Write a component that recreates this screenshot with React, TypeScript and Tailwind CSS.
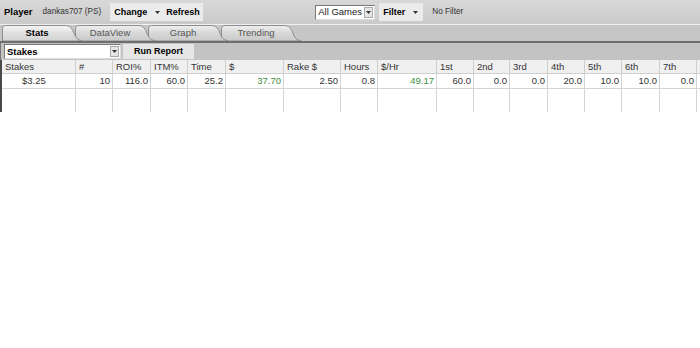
import React from "react";

const cols = ["Stakes", "#", "ROI%", "ITM%", "Time", "$", "Rake $", "Hours", "$/Hr", "1st", "2nd", "3rd", "4th", "5th", "6th", "7th", ""];
const row = ["$3.25", "10", "116.0", "60.0", "25.2", "37.70", "2.50", "0.8", "49.17", "60.0", "0.0", "0.0", "20.0", "10.0", "10.0", "0.0", ""];
const green = [5, 8];

const tabs = ["Stats", "DataView", "Graph", "Trending"];
const tabZ = ["z-40", "z-30", "z-20", "z-10"];

function Arrow() {
  return (
    <svg width="5" height="3" viewBox="0 0 5 3" className="shrink-0">
      <path d="M0 0h5L2.5 3z" fill="#333" />
    </svg>
  );
}

function SelectBox({ label, w, bold }: { label: string; w: string; bold?: boolean }) {
  return (
    <div className={`${w} flex h-[15px] items-center justify-between border border-t-[#777] border-l-[#777] border-r-[#ddd] border-b-[#ddd] bg-white pl-[2px] pr-[1px]`}>
      <span className={bold ? "font-bold text-black" : "text-[#222]"}>{label}</span>
      <span className="flex h-[11px] w-[9px] items-center justify-center border border-[#aaa] bg-[#e6e6e6]">
        <Arrow />
      </span>
    </div>
  );
}

function Tab({ label, i }: { label: string; i: number }) {
  const active = i === 0;
  const gid = `tabgrad${i}`;
  return (
    <div className={`relative -mr-[7px] h-[16px] w-[80px] ${tabZ[i]}`}>
      <svg width="80" height="16" viewBox="0 0 80 16" className="absolute inset-0">
        <defs>
          <linearGradient id={gid} x1="0" y1="0" x2="0" y2="1">
            <stop offset="0" stopColor={active ? "#f6f6f6" : "#f0f0f0"} />
            <stop offset="0.45" stopColor={active ? "#e2e2e2" : "#d9d9d9"} />
            <stop offset="1" stopColor={active ? "#d2d2d2" : "#c9c9c9"} />
          </linearGradient>
        </defs>
        <path
          d="M0.5 16 L0.5 3.5 Q0.5 0.5 3.5 0.5 L63 0.5 C68 0.5 69.5 3 71.5 7 C73.5 12 75 15.5 80 15.5 L80 16 Z"
          fill={`url(#${gid})`}
          stroke="#8c8c8c"
          strokeWidth="1"
        />
      </svg>
      <span
        className={`absolute left-0 top-0 flex h-[16px] w-[70px] items-center justify-center text-[9.5px] ${
          active ? "font-bold text-black" : "text-[#555]"
        }`}
      >
        {label}
      </span>
    </div>
  );
}

export default function App() {
  return (
    <div className="h-[348px] w-[700px] overflow-hidden bg-white font-['Liberation_Sans',Arial,sans-serif] text-[9.5px] leading-none text-[#222]">
      {/* top bar */}
      <div className="flex h-[25px] items-center border-b border-[#efefef] bg-gradient-to-b from-[#d8d8d8] to-[#cacaca]">
        <span className="ml-[4px] text-[9.5px] font-bold text-black">Player</span>
        <span className="ml-[10px] text-[8.2px] text-[#333]">dankas707 (PS)</span>
        <div className="ml-[9px] flex h-[18px] text-[9px]">
          <div className="flex w-[53px] items-center bg-[#ebebeb] pl-[4px]">
            <span className="font-bold text-black">Change</span>
            <span className="ml-[8px]">
              <Arrow />
            </span>
          </div>
          <div className="flex w-[40px] items-center bg-[#ebebeb] pl-[3px]">
            <span className="font-bold text-black">Refresh</span>
          </div>
        </div>
        <div className="ml-[112px]">
          <SelectBox label="All Games" w="w-[60px]" />
        </div>
        <div className="ml-[4px] flex h-[18px] w-[44px] items-center bg-[#ebebeb] pl-[4px] text-[9px]">
          <span className="font-bold text-black">Filter</span>
          <span className="ml-[8px]">
            <Arrow />
          </span>
        </div>
        <span className="ml-[9px] text-[8.2px] text-[#333]">No Filter</span>
      </div>

      {/* tabs */}
      <div className="flex h-[16px] items-end bg-[#c6c6c6] pl-[2px]">
        {tabs.map((t, i) => (
          <Tab key={t} label={t} i={i} />
        ))}
      </div>
      <div className="h-[2px] bg-[#6e6e6e]" />

      {/* toolbar */}
      <div className="flex h-[17px] items-center border-l border-[#777] bg-[#c3c3c3] pl-[3px]">
        <SelectBox label="Stakes" w="w-[117px]" bold />
        <div className="ml-[2px] flex h-[15px] w-[71px] items-center justify-center bg-[#e6e6e6] text-[9px] font-bold text-black">
          Run Report
        </div>
      </div>

      {/* table */}
      <div className="border-l-2 border-[#4a4a4a]">
        <div className="grid grid-cols-[74px_37px_38px_37px_38px_58px_57px_37px_59px_37px_36px_38px_37px_37px_38px_37px_1fr]">
          {cols.map((c, i) => (
            <div
              key={"h" + i}
              className="flex h-[14px] items-center border-b border-r border-[#cfcfcf] bg-[#f0f0f0] pl-[3px] text-[#333]"
            >
              {c}
            </div>
          ))}
          {row.map((v, i) => (
            <div
              key={"d" + i}
              className={`flex h-[15px] items-center border-b border-r border-[#d4d4d4] ${
                i === 0 ? "pl-[20px]" : "justify-end pr-[2px]"
              } ${green.includes(i) ? "text-[#3d8f3d]" : "text-[#333]"}`}
            >
              {v}
            </div>
          ))}
          {cols.map((_, i) => (
            <div key={"e" + i} className="h-[23px] border-r border-[#d4d4d4]" />
          ))}
        </div>
      </div>
    </div>
  );
}
